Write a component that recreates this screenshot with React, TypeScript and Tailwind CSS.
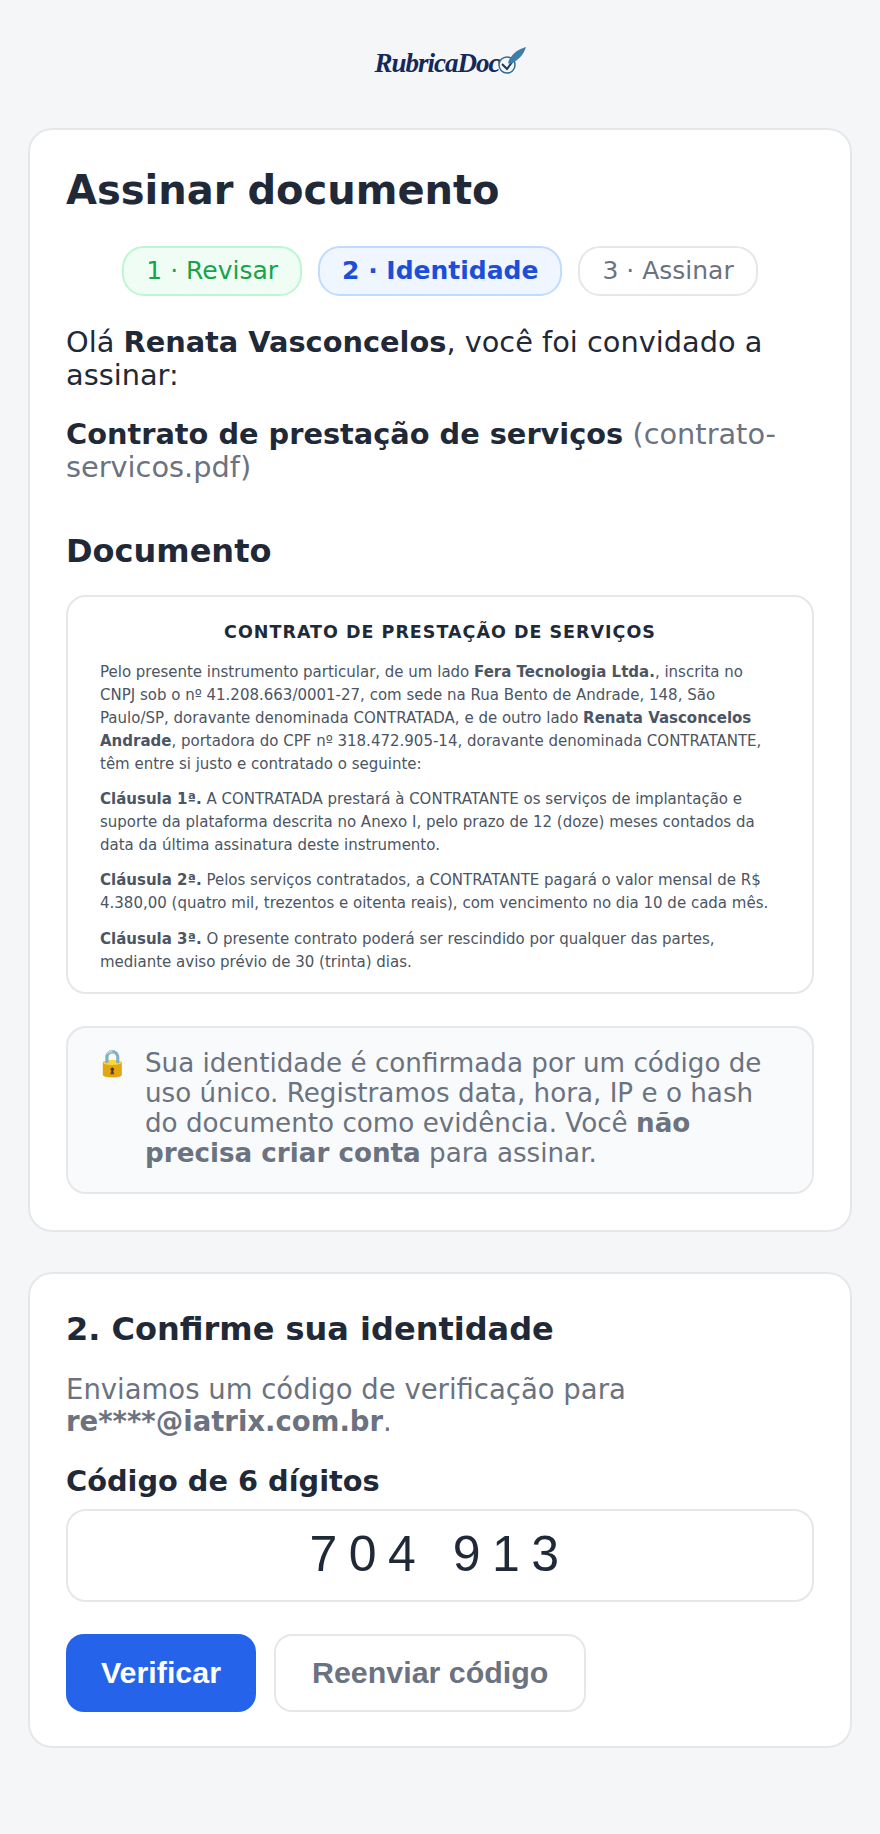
import React from 'react'

const sans = "font-['DejaVu_Sans',sans-serif]"

function Logo() {
  return (
    <div className="flex items-center h-[44px]">
      <span className="font-['Liberation_Serif',serif] italic font-bold text-[27px] leading-none text-[#14285a] tracking-[-1px]">RubricaDoc</span>
      <svg width="32" height="34" viewBox="0 0 32 34" className="ml-[-6px] shrink-0">
        <circle cx="13" cy="19" r="8" fill="none" stroke="#2f6a96" strokeWidth="1.5" />
        <path d="M8 18 L13 23 L22 11" fill="none" stroke="#14385f" strokeWidth="2" />
        <path d="M14 17 C16 9 24 3 32 1 C30 8 25 14 16 18 Z" fill="#3f7ea8" />
      </svg>
    </div>
  )
}

function Step({ className, children }: { className: string; children: React.ReactNode }) {
  return <span className={`h-[50px] px-[22px] flex items-center rounded-[22px] border-2 text-[25px] ${className}`}>{children}</span>
}

export default function App() {
  return (
    <div className={`min-h-[1834px] bg-[#f4f6f8] px-[28px] text-[#1f2937] text-[28.8px] ${sans}`}>
      <header className="flex justify-center pl-[20px] pt-[41px] pb-[43px]"><Logo /></header>

      <section className="bg-white border-2 border-[#e5e7eb] rounded-[24px] p-[36px]">
        <h1 className="text-[40px] font-bold leading-[48px]">Assinar documento</h1>
        <div className="flex justify-center gap-[16px] mt-[32px]">
          <Step className="bg-[#f0fdf4] border-[#bbf7d0] text-[#16a34a]">1 · Revisar</Step>
          <Step className="bg-[#eff6ff] border-[#bfdbfe] text-[#1d4ed8] font-bold">2 · Identidade</Step>
          <Step className="bg-white border-[#e5e7eb] text-[#6b7280]">3 · Assinar</Step>
        </div>
        <p className="mt-[30px] leading-[33px]">Olá <b>Renata Vasconcelos</b>, você foi convidado a assinar:</p>
        <p className="mt-[26px] leading-[33px]"><b>Contrato de prestação de serviços</b> <span className="text-[#6b7280]">(contrato-servicos.pdf)</span></p>

        <h2 className="mt-[43px] text-[32px] font-bold leading-[48px]">Documento</h2>
        <div className="mt-[20px] border-2 border-[#e5e7eb] rounded-[20px] px-[32px] pt-[24px] pb-[18px] text-[15px] leading-[23px] text-[#4b5563]">
          <h3 className="text-center text-[17.5px] font-bold tracking-[1px] text-[#1f2937] mb-[17px]">CONTRATO DE PRESTAÇÃO DE SERVIÇOS</h3>
          <p className="mb-[12px]">Pelo presente instrumento particular, de um lado <b>Fera Tecnologia Ltda.</b>, inscrita no CNPJ sob o nº 41.208.663/0001-27, com sede na Rua Bento de Andrade, 148, São Paulo/SP, doravante denominada CONTRATADA, e de outro lado <b>Renata Vasconcelos Andrade</b>, portadora do CPF nº 318.472.905-14, doravante denominada CONTRATANTE, têm entre si justo e contratado o seguinte:</p>
          <p className="mb-[12px]"><b>Cláusula 1ª.</b> A CONTRATADA prestará à CONTRATANTE os serviços de implantação e suporte da plataforma descrita no Anexo I, pelo prazo de 12 (doze) meses contados da data da última assinatura deste instrumento.</p>
          <p className="mb-[13px]"><b>Cláusula 2ª.</b> Pelos serviços contratados, a CONTRATANTE pagará o valor mensal de R$ 4.380,00 (quatro mil, trezentos e oitenta reais), com vencimento no dia 10 de cada mês.</p>
          <p><b>Cláusula 3ª.</b> O presente contrato poderá ser rescindido por qualquer das partes, mediante aviso prévio de 30 (trinta) dias.</p>
        </div>
        <div className="mt-[32px] flex gap-[16px] bg-[#f9fafb] border-2 border-[#e5e7eb] rounded-[20px] px-[28px] pt-[20px] pb-[24px] text-[#6b7280] text-[26.2px] leading-[30px]">
          <span>🔒</span>
          <p>Sua identidade é confirmada por um código de uso único. Registramos data, hora, IP e o hash do documento como evidência. Você <b>não precisa criar conta</b> para assinar.</p>
        </div>
      </section>

      <section className="mt-[40px] bg-white border-2 border-[#e5e7eb] rounded-[24px] px-[36px] pt-[33px] pb-[34px]">
        <h2 className="text-[32px] font-bold leading-[44px]">2. Confirme sua identidade</h2>
        <p className="mt-[22px] leading-[32px] text-[27.5px] text-[#6b7280]">Enviamos um código de verificação para <b>re****@iatrix.com.br</b>.</p>
        <label className="block mt-[24px] font-bold leading-[40px]">Código de 6 dígitos</label>
        <input readOnly value="704 913" className="mt-[8px] block w-full h-[93px] pb-[4px] border-2 border-[#e5e7eb] rounded-[20px] text-center text-[50px] tracking-[11.5px] font-['Liberation_Sans',sans-serif]" />
        <div className="flex gap-[18px] mt-[32px] font-['Liberation_Sans',sans-serif] font-bold text-[30.4px]">
          <button className="h-[78px] px-[35px] rounded-[18px] bg-[#2563eb] text-white">Verificar</button>
          <button className="h-[78px] px-[36px] rounded-[18px] border-2 border-[#e5e7eb] text-[#6b7280]">Reenviar código</button>
        </div>
      </section>
    </div>
  )
}
